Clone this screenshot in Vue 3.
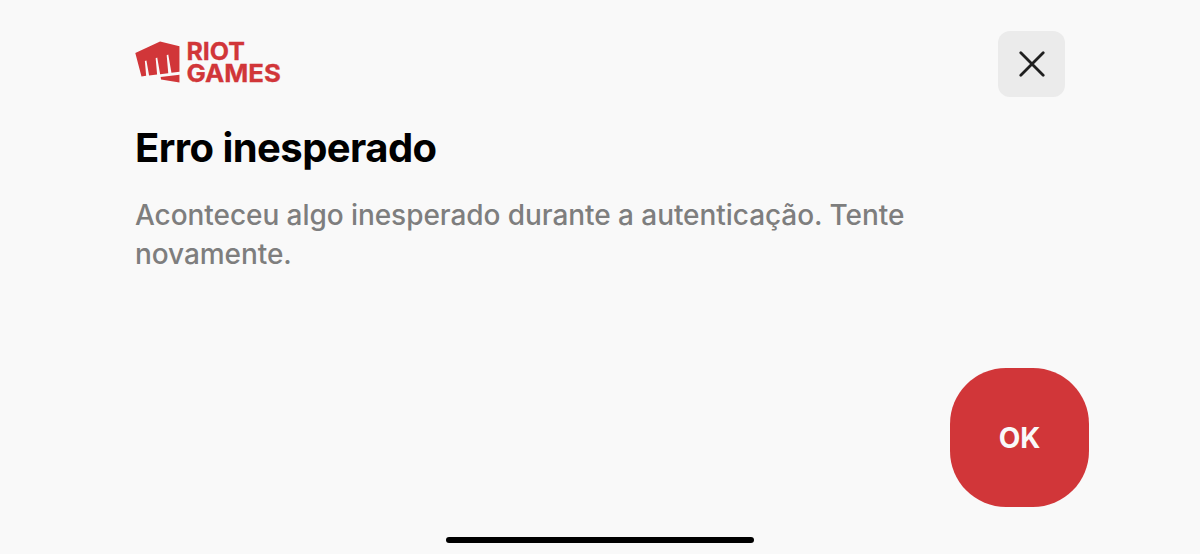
<template>
    <main class="screen">
        <header class="top">
            <svg class="logo" width="150" height="48" viewBox="0 0 150 48" role="img" aria-label="Riot Games">
                <path
                    transform="translate(.3 5.9) scale(1.84)"
                    d="M13.458.86 0 7.093l3.353 12.761 2.552-.313-.701-8.024.838-.373 1.447 8.202 4.361-.535-.775-8.857.83-.37 1.591 9.025 4.412-.542-.849-9.708.84-.374 1.74 9.87L24 17.318V3.5Zm.316 19.356.222 1.256L24 23.14v-4.18l-10.22 1.256Z" />
                <text x="51.4" y="26.2" textLength="58.6" lengthAdjust="spacingAndGlyphs">RIOT</text>
                <text x="51.4" y="47.5" textLength="94.4" lengthAdjust="spacingAndGlyphs">GAMES</text>
            </svg>
            <button class="close" aria-label="Fechar" @click="emit('close')">
                <svg width="26" height="26" viewBox="0 0 26 26">
                    <path d="M1.8 1.8l22.4 22.4M24.2 1.8L1.8 24.2" />
                </svg>
            </button>
        </header>
        <h1 class="title">{{ title }}</h1>
        <p class="message">{{ message }}</p>
        <button class="ok" @click="emit('confirm')">OK</button>
        <div class="home-bar"></div>
    </main>
</template>

<script setup>
import { ref } from 'vue';

const emit = defineEmits(['close', 'confirm']);

const title = ref('Erro inesperado');
const message = ref('Aconteceu algo inesperado durante a autenticação. Tente novamente.');
</script>

<style>
    body {
        margin: 0;
        background-color: #f9f9f9;
    }
</style>

<style scoped>
    .screen {
        box-sizing: border-box;
        display: flex;
        flex-direction: column;
        height: 554px;
        padding: 31px 135px 11px;
        overflow: hidden;
        background-color: #f9f9f9;
        font-family: Inter, sans-serif;
    }

    .top {
        display: flex;
        justify-content: space-between;
        align-items: flex-start;
        height: 67px;
    }

    .logo {
        margin-top: 3px;
        fill: #d13639;
        overflow: visible;
    }

    .logo text {
        font-size: 24.5px;
        font-weight: 700;
        stroke: #d13639;
        stroke-width: 0.3;
    }

    button {
        display: flex;
        align-items: center;
        justify-content: center;
        padding: 0;
        border: 0;
        font-family: inherit;
    }

    .close {
        width: 67px;
        height: 66px;
        border-radius: 12px;
        background-color: #ebebeb;
    }

    .close path {
        fill: none;
        stroke: #1f1f1f;
        stroke-width: 2.8;
        stroke-linecap: round;
    }

    .title {
        margin: 26px 0 0;
        font-size: 40px;
        line-height: 48px;
        font-weight: 700;
        letter-spacing: -0.56px;
        color: #000;
    }

    .message {
        width: 800px;
        margin: 24px 0 0;
        font-size: 28px;
        line-height: 39px;
        font-weight: 500;
        letter-spacing: -0.06px;
        color: #7e7e7e;
    }

    .ok {
        align-self: flex-end;
        width: 139px;
        height: 139px;
        margin: auto -24px 30px 0;
        border-radius: 56px;
        background-color: #d13639;
        color: #f9f9f9;
        font-size: 28px;
        font-weight: 700;
    }

    .home-bar {
        flex: none;
        align-self: center;
        width: 308px;
        height: 6px;
        border-radius: 3px;
        background-color: #000;
    }
</style>
